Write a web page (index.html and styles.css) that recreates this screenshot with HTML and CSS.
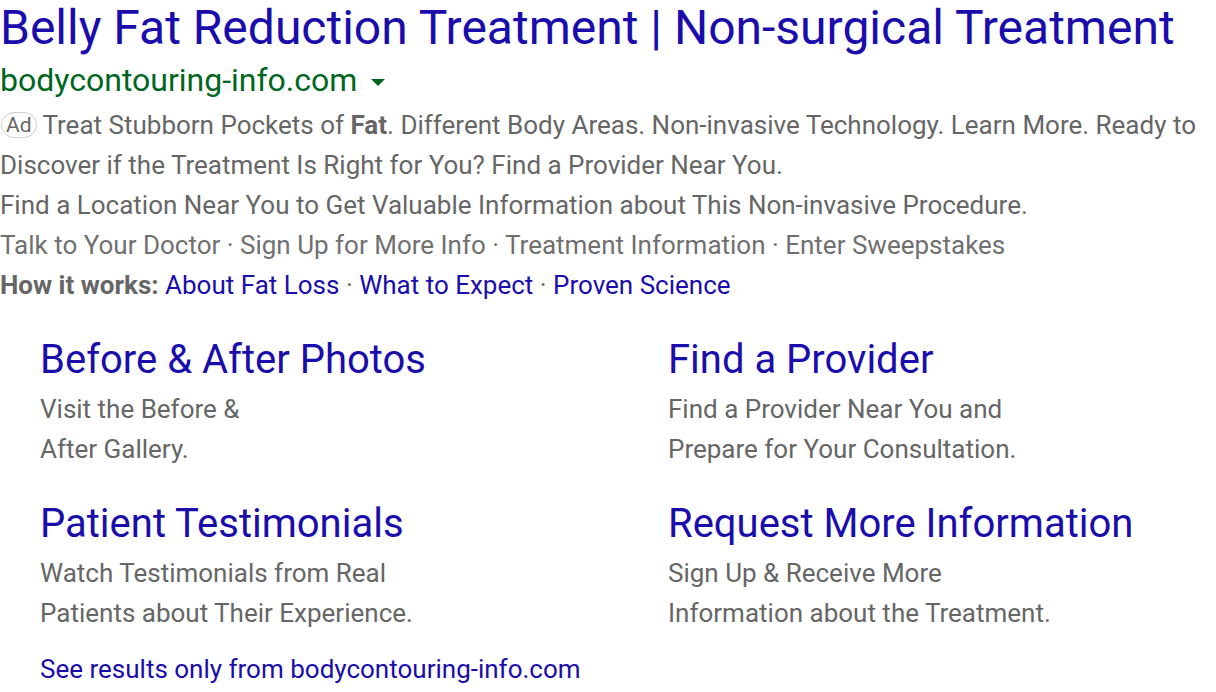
FILE: index.html
```html
<!DOCTYPE html>
<html>
<head>
<meta charset="utf-8">
<link rel="stylesheet" href="styles.css">
</head>
<body>
<div class="ad">
  <h1 class="title">Belly Fat Reduction Treatment | Non-surgical Treatment</h1>
  <div class="url">bodycontouring-info.com <span class="caret"></span></div>
  <p class="desc"><span class="badge">Ad</span> Treat Stubborn Pockets of <b>Fat</b>. Different Body Areas. Non-invasive Technology. Learn More. Ready to Discover if the Treatment Is Right for You? Find a Provider Near You.</p>
  <p class="desc">Find a Location Near You to Get Valuable Information about This Non-invasive Procedure.</p>
  <p class="desc light">Talk to Your Doctor · Sign Up for More Info · Treatment Information · Enter Sweepstakes</p>
  <p class="desc"><b>How it works:</b> <a>About Fat Loss</a> · <a>What to Expect</a> · <a>Proven Science</a></p>
  <div class="sitelinks">
    <div class="sl">
      <div class="sl-title">Before &amp; After Photos</div>
      <div class="sl-desc">Visit the Before &amp;<br>After Gallery.</div>
    </div>
    <div class="sl">
      <div class="sl-title">Find a Provider</div>
      <div class="sl-desc">Find a Provider Near You and<br>Prepare for Your Consultation.</div>
    </div>
    <div class="sl">
      <div class="sl-title">Patient Testimonials</div>
      <div class="sl-desc">Watch Testimonials from Real<br>Patients about Their Experience.</div>
    </div>
    <div class="sl">
      <div class="sl-title">Request More Information</div>
      <div class="sl-desc">Sign Up &amp; Receive More<br>Information about the Treatment.</div>
    </div>
  </div>
  <div class="more">See results only from bodycontouring-info.com</div>
</div>
</body>
</html>
```
FILE: styles.css
```css
html, body {
  margin: 0;
  padding: 0;
  background: #fff;
}
body {
  font-family: Roboto, "Liberation Sans", Arial, sans-serif;
}
.title {
  margin: 0;
  font-weight: 400;
  font-size: 48px;
  line-height: 56px;
  color: #1a0dab;
  white-space: nowrap;
}
.url {
  font-size: 32px;
  line-height: 49px;
  color: #006621;
  display: flex;
  align-items: center;
}
.caret {
  display: inline-block;
  width: 0;
  height: 0;
  border-left: 7px solid transparent;
  border-right: 7px solid transparent;
  border-top: 7px solid #006621;
  margin-left: 14px;
  margin-top: 4px;
}
.desc {
  margin: 0;
  font-size: 26px;
  line-height: 40px;
  color: #666;
}
.desc.light {
  color: #707070;
}
.desc b {
  font-weight: 700;
}
.desc a {
  color: #1a0dab;
}
.badge {
  display: inline-block;
  font-size: 21px;
  line-height: 24px;
  padding: 0 4px;
  border: 1px solid #cfcfcf;
  border-radius: 13px;
  color: #666;
  vertical-align: 2px;
  margin-left: 1px;
}
.sitelinks {
  display: grid;
  grid-template-columns: 628px 1fr;
  padding-left: 40px;
  padding-top: 30px;
  row-gap: 30px;
}
.sl-title {
  font-size: 40px;
  line-height: 50px;
  color: #1a0dab;
}
.sl-desc {
  margin-top: 4px;
  font-size: 26px;
  line-height: 40px;
  color: #666;
}
.more {
  padding-left: 40px;
  padding-top: 16px;
  font-size: 26px;
  line-height: 40px;
  color: #1a0dab;
}
```
